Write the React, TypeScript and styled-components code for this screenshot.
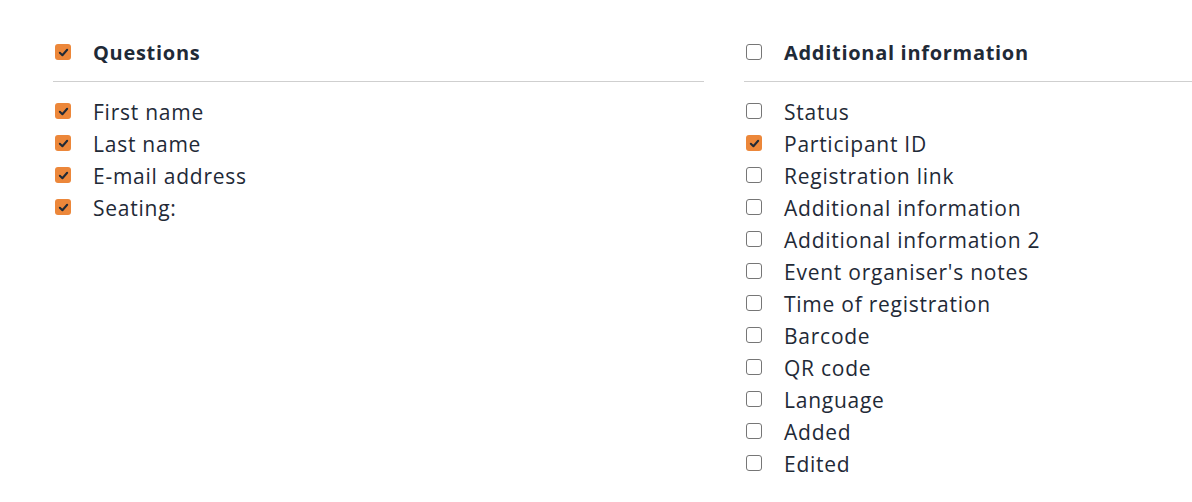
import React from "react";
import styled, { createGlobalStyle } from "styled-components";

const GlobalStyle = createGlobalStyle`
  html, body {
    margin: 0;
    padding: 0;
    background: #fff;
    overflow: hidden;
  }
  body {
    font-family: "Open Sans", "Lato", sans-serif;
    color: #1f2a37;
  }
`;

const Page = styled.div`
  display: grid;
  grid-template-columns: 651px 651px;
  column-gap: 40px;
  padding: 34px 0 0 53px;
  width: max-content;
`;

const Column = styled.section`
  display: flex;
  flex-direction: column;
`;

const Header = styled.div`
  display: flex;
  align-items: center;
  height: 36px;
  padding-bottom: 11px;
  border-bottom: 1px solid #cfcfcf;
  margin-bottom: 13px;
`;

const Title = styled.h2`
  margin: 0;
  font-size: 20px;
  font-weight: 700;
  letter-spacing: 0.7px;
  color: #1f2a37;
`;

const List = styled.ul`
  list-style: none;
  margin: 0;
  padding: 0;
`;

const Row = styled.li`
  display: flex;
  align-items: center;
  height: 32px;
`;

const Label = styled.span`
  font-size: 21px;
  letter-spacing: 0.75px;
  padding-top: 1px;
  color: #1f2a37;
`;

const Box = styled.span<{ $checked: boolean }>`
  flex: none;
  display: flex;
  align-items: center;
  justify-content: center;
  width: 16px;
  height: 16px;
  margin: 0 22px 0 2px;
  box-sizing: border-box;
  border-radius: 3px;
  background: ${(p) => (p.$checked ? "#ec873a" : "#fff")};
  border: ${(p) => (p.$checked ? "none" : "1.5px solid #767676")};
`;

function Check({ checked }: { checked: boolean }) {
  return (
    <Box $checked={checked}>
      {checked && (
        <svg width="11" height="11" viewBox="0 0 12 12">
          <path
            d="M2 6.3 L4.8 9 L10 3"
            fill="none"
            stroke="#1f2a37"
            strokeWidth="2.2"
            strokeLinecap="round"
            strokeLinejoin="round"
          />
        </svg>
      )}
    </Box>
  );
}

const questions = ["First name", "Last name", "E-mail address", "Seating:"];

const extras: [string, boolean][] = [
  ["Status", false],
  ["Participant ID", true],
  ["Registration link", false],
  ["Additional information", false],
  ["Additional information 2", false],
  ["Event organiser's notes", false],
  ["Time of registration", false],
  ["Barcode", false],
  ["QR code", false],
  ["Language", false],
  ["Added", false],
  ["Edited", false],
];

export default function App() {
  return (
    <>
      <GlobalStyle />
      <Page>
        <Column>
          <Header>
            <Check checked />
            <Title>Questions</Title>
          </Header>
          <List>
            {questions.map((q) => (
              <Row key={q}>
                <Check checked />
                <Label>{q}</Label>
              </Row>
            ))}
          </List>
        </Column>
        <Column>
          <Header>
            <Check checked={false} />
            <Title>Additional information</Title>
          </Header>
          <List>
            {extras.map(([label, on]) => (
              <Row key={label}>
                <Check checked={on} />
                <Label>{label}</Label>
              </Row>
            ))}
          </List>
        </Column>
      </Page>
    </>
  );
}
